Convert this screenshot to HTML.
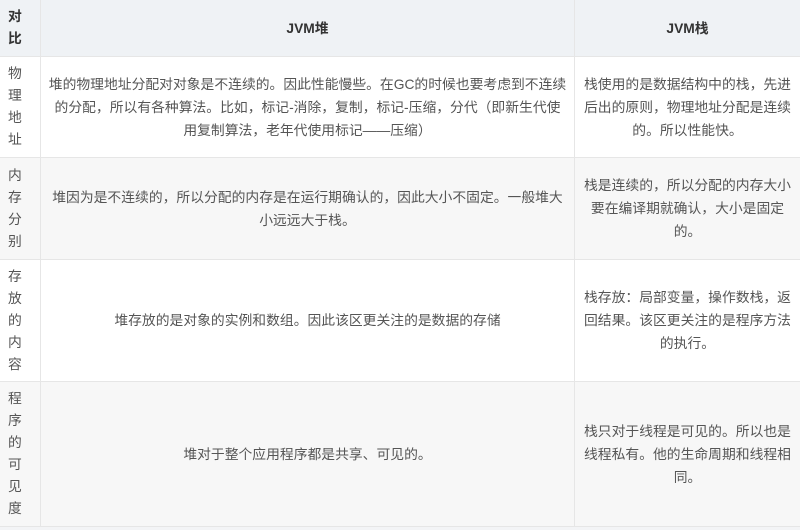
<!DOCTYPE html>
<html><head><meta charset="utf-8"><style>
html,body{margin:0;padding:0;width:800px;height:530px;background:#f3f4f6;overflow:hidden}
.t{position:absolute;left:0;top:0;width:800px;font-family:"Liberation Sans","Noto Sans CJK SC",sans-serif;font-size:13.8px;line-height:23px;color:#555}
.c{position:absolute;box-sizing:border-box;display:flex;align-items:center;justify-content:center;text-align:center;border-right:1px solid #e6e6e6;border-bottom:1px solid #e6e6e6;padding:0;white-space:nowrap}
.k{justify-content:flex-start;text-align:left;padding:0 0 0 8px;line-height:22px}
.h{background:#eff2f5;font-weight:bold;color:#333}
.w{background:#fff}.g{background:#f7f7f7}
</style></head><body><div class="t">
<div class="c h k" style="left:0;top:0;width:41px;height:57px">对<br>比</div>
<div class="c h" style="left:41px;top:0;width:534px;height:57px">JVM堆</div>
<div class="c h" style="left:575px;top:0;width:225px;height:57px;border-right:none">JVM栈</div>

<div class="c w k" style="left:0;top:57px;width:41px;height:101px">物<br>理<br>地<br>址</div>
<div class="c w" style="left:41px;top:57px;width:534px;height:101px">堆的物理地址分配对对象是不连续的。因此性能慢些。在GC的时候也要考虑到不连续<br>的分配，所以有各种算法。比如，标记-消除，复制，标记-压缩，分代（即新生代使<br>用复制算法，老年代使用标记——压缩）</div>
<div class="c w" style="left:575px;top:57px;width:225px;height:101px;border-right:none">栈使用的是数据结构中的栈，先进<br>后出的原则，物理地址分配是连续<br>的。所以性能快。</div>

<div class="c g k" style="left:0;top:158px;width:41px;height:102px">内<br>存<br>分<br>别</div>
<div class="c g" style="left:41px;top:158px;width:534px;height:102px">堆因为是不连续的，所以分配的内存是在运行期确认的，因此大小不固定。一般堆大<br>小远远大于栈。</div>
<div class="c g" style="left:575px;top:158px;width:225px;height:102px;border-right:none">栈是连续的，所以分配的内存大小<br>要在编译期就确认，大小是固定<br>的。</div>

<div class="c w k" style="left:0;top:260px;width:41px;height:122px">存<br>放<br>的<br>内<br>容</div>
<div class="c w" style="left:41px;top:260px;width:534px;height:122px">堆存放的是对象的实例和数组。因此该区更关注的是数据的存储</div>
<div class="c w" style="left:575px;top:260px;width:225px;height:122px;border-right:none">栈存放：局部变量，操作数栈，返<br>回结果。该区更关注的是程序方法<br>的执行。</div>

<div class="c g k" style="left:0;top:382px;width:41px;height:145px">程<br>序<br>的<br>可<br>见<br>度</div>
<div class="c g" style="left:41px;top:382px;width:534px;height:145px">堆对于整个应用程序都是共享、可见的。</div>
<div class="c g" style="left:575px;top:382px;width:225px;height:145px;border-right:none">栈只对于线程是可见的。所以也是<br>线程私有。他的生命周期和线程相<br>同。</div>
</div></body></html>
